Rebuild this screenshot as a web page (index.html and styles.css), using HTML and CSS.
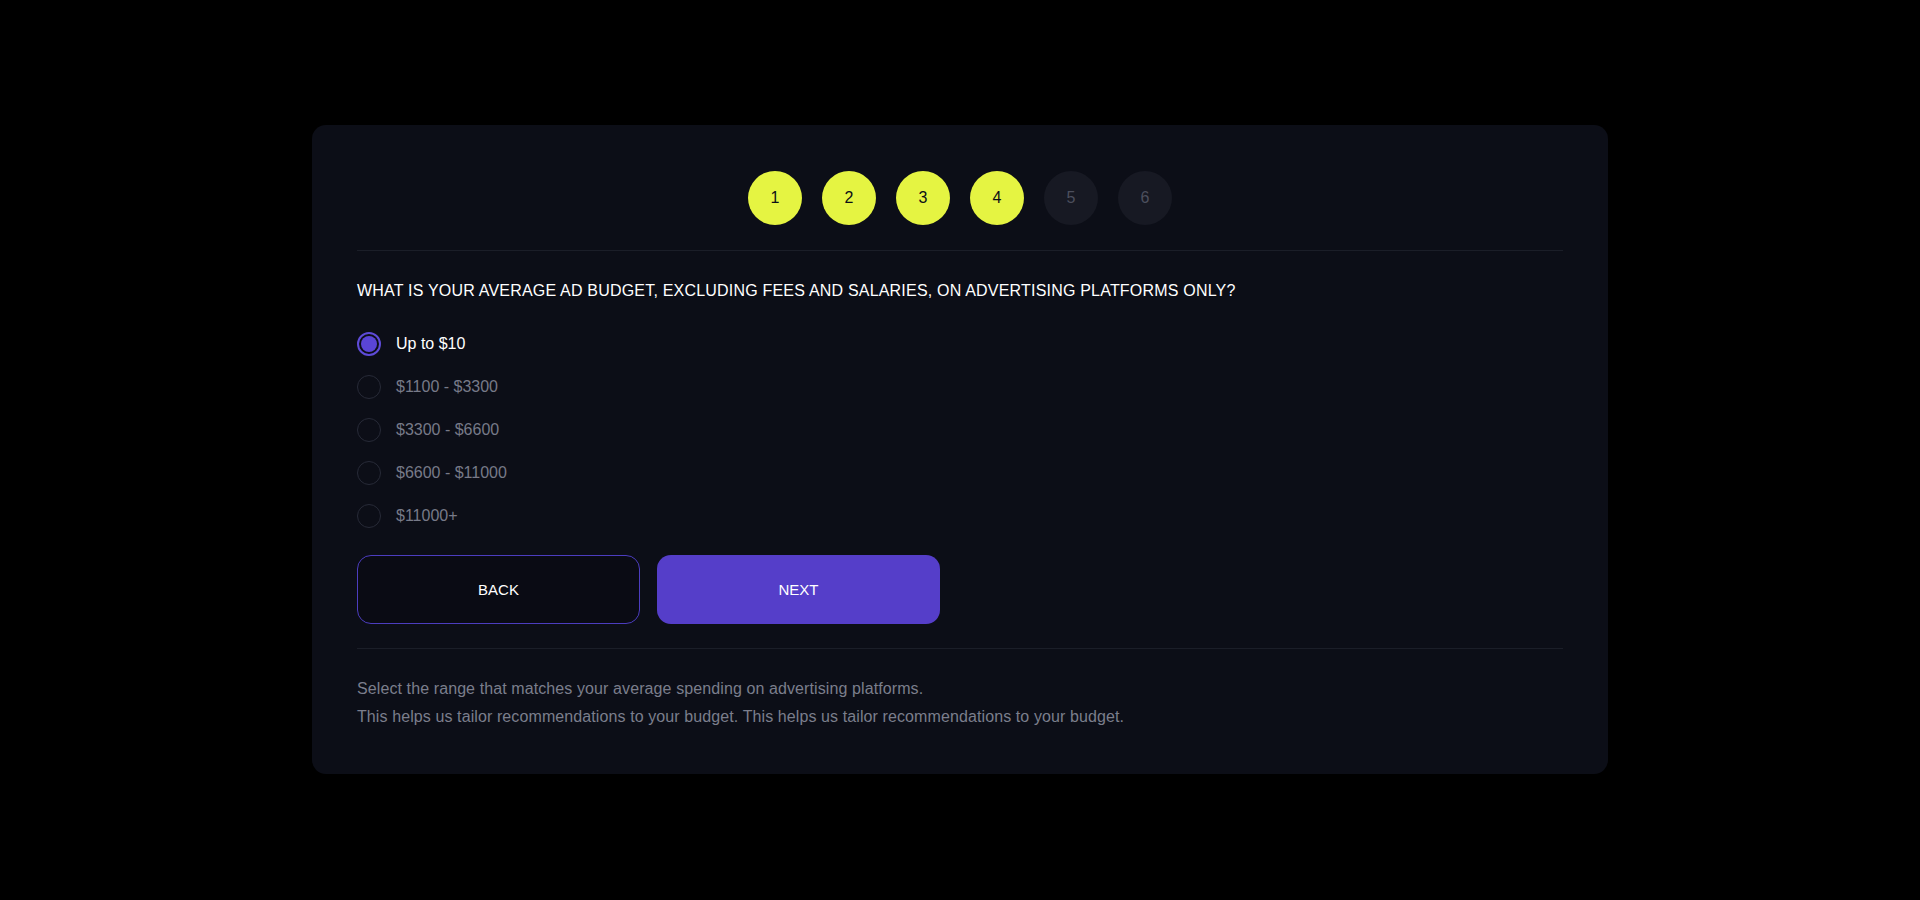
FILE: index.html
```html
<!DOCTYPE html>
<html lang="en">
<head>
  <meta charset="UTF-8">
  <title>Ad Budget - Step 4</title>
  <link rel="stylesheet" href="styles.css">
</head>
<body>

  <!-- 问卷卡片 -->
  <div class="quiz-card">

    <!-- 步骤指示 -->
    <div class="steps">
      <span class="step done">1</span>
      <span class="step done">2</span>
      <span class="step done">3</span>
      <span class="step done">4</span>
      <span class="step">5</span>
      <span class="step">6</span>
    </div>

    <h2 class="question">What is your average ad budget, excluding fees and salaries, on advertising platforms only?</h2>

    <!-- 选项 -->
    <ul class="options">
      <li class="option selected"><span class="radio"></span>Up to $10</li>
      <li class="option"><span class="radio"></span>$1100 - $3300</li>
      <li class="option"><span class="radio"></span>$3300 - $6600</li>
      <li class="option"><span class="radio"></span>$6600 - $11000</li>
      <li class="option"><span class="radio"></span>$11000+</li>
    </ul>

    <div class="actions">
      <button class="btn btn-outline">BACK</button>
      <button class="btn btn-primary">NEXT</button>
    </div>

    <div class="hint">
      <p>Select the range that matches your average spending on advertising platforms.</p>
      <p>This helps us tailor recommendations to your budget. This helps us tailor recommendations to your budget.</p>
    </div>
  </div>

</body>
</html>
```

FILE: styles.css
```css
body {
  font-family: 'Liberation Sans', Arial, sans-serif;
  background-color: #000;
  margin: 0;
  padding: 0;
  min-height: 100vh;
  display: flex;
  justify-content: center;
  align-items: center;
}

/* 卡片 */
.quiz-card {
  width: 1296px;
  box-sizing: border-box;
  background: #0c0e17;
  border-radius: 14px;
  padding: 46px 45px 43px;
  margin-top: -1px;
}

/* 步骤 */
.steps {
  display: flex;
  justify-content: center;
  gap: 20px;
  padding-bottom: 25px;
  border-bottom: 1px solid #1b1e28;
}
.step {
  width: 54px;
  height: 54px;
  border-radius: 50%;
  background: #171923;
  color: #4c4f5d;
  font-size: 16px;
  display: flex;
  justify-content: center;
  align-items: center;
}
.step.done {
  background: #e5f442;
  color: #0c0e17;
}

/* 问题 */
.question {
  margin: 30px 0 0;
  font-size: 16px;
  line-height: 20px;
  font-weight: normal;
  letter-spacing: 0.2px;
  text-transform: uppercase;
  color: #fff;
}

/* 选项列表 */
.options {
  list-style: none;
  margin: 21px 0 0;
  padding: 0;
}
.option {
  height: 43px;
  display: flex;
  align-items: center;
  gap: 15px;
  font-size: 16px;
  color: #777a88;
  cursor: pointer;
}
.option.selected {
  color: #fff;
}
.radio {
  width: 24px;
  height: 24px;
  box-sizing: border-box;
  border-radius: 50%;
  border: 1px solid #272a37;
  position: relative;
}
.option.selected .radio {
  border: 2px solid #5e4bd8;
}
.option.selected .radio::after {
  content: "";
  position: absolute;
  top: 2px; left: 2px;
  width: 16px;
  height: 16px;
  border-radius: 50%;
  background: #5a45d6;
}

/* 按钮 */
.actions {
  display: flex;
  gap: 17px;
  margin-top: 18px;
  padding-bottom: 24px;
  border-bottom: 1px solid #1b1e28;
}
.btn {
  width: 283px;
  height: 69px;
  border-radius: 14px;
  font-family: inherit;
  font-size: 15px;
  color: #fff;
  cursor: pointer;
}
.btn-outline {
  background: #0a0b14;
  border: 1px solid #4c3dbf;
}
.btn-primary {
  background: #553ec9;
  border: none;
}
.btn-primary:hover {
  background: #4a35b5;
}

/* 底部说明 */
.hint {
  margin-top: 26px;
  font-size: 16px;
  line-height: 28px;
  letter-spacing: 0.1px;
  color: #7b7e8c;
}
.hint p {
  margin: 0;
}
```
